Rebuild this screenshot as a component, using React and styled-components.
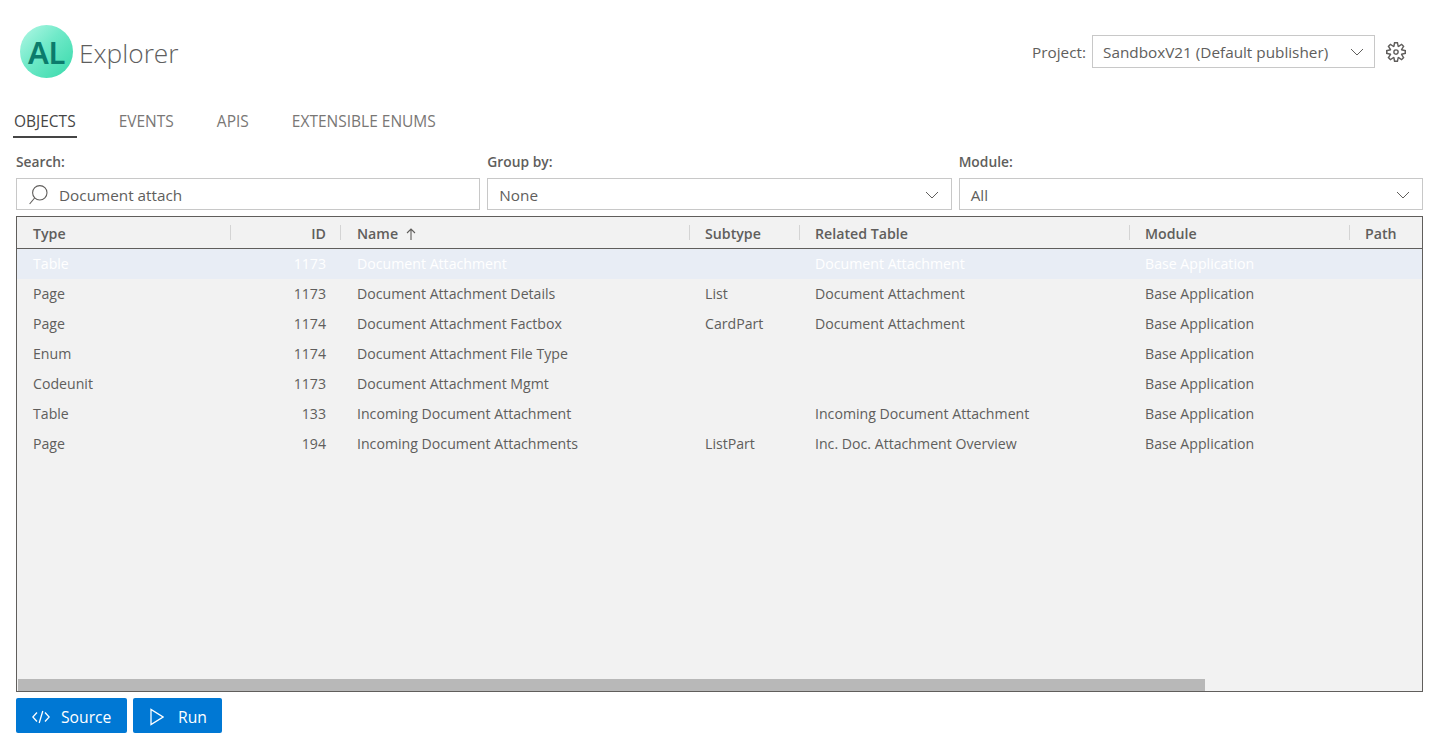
import React from 'react';
import styled, { createGlobalStyle } from 'styled-components';
import { VscSettingsGear } from 'react-icons/vsc';

const GlobalStyle = createGlobalStyle`
  html, body {
    margin: 0;
    padding: 0;
    background: #ffffff;
  }
  body {
    font-family: "Open Sans", "Noto Sans", "Liberation Sans", sans-serif;
    font-size: 14.15px;
    color: #605e5c;
  }
`;

const Page = styled.div`
  height: 742px;
  overflow: hidden;
  padding: 0 10px 0 16px;
  box-sizing: border-box;
`;

const Header = styled.header`
  height: 96px;
  display: flex;
  justify-content: space-between;
  align-items: flex-start;
`;

const Brand = styled.div`
  display: flex;
  align-items: center;
  gap: 6px;
  margin: 25px 0 0 4px;
`;

const LogoCircle = styled.div`
  width: 53px;
  height: 53px;
  border-radius: 50%;
  background: linear-gradient(135deg, #b4f8e6 0%, #6fe9c8 45%, #37d9aa 100%);
  display: flex;
  align-items: center;
  justify-content: center;
  color: #0b7b6c;
  font-family: "Noto Sans", sans-serif;
  font-size: 31px;
  font-weight: 600;
  letter-spacing: -0.5px;
`;

const BrandName = styled.span`
  font-size: 26.3px;
  font-weight: 300;
  color: #5e5e5e;
  line-height: 34px;
  margin-top: 2px;
`;

const ProjectArea = styled.div`
  display: flex;
  align-items: center;
  margin: 35px 17px 0 0;
  font-size: 15.3px;
`;

const ProjectLabel = styled.span`
  margin-right: 6px;
`;

const ProjectSelect = styled.div`
  width: 283px;
  height: 33px;
  box-sizing: border-box;
  border: 1px solid #c8c8c8;
  display: flex;
  align-items: center;
  justify-content: space-between;
  padding: 0 10px 0 10px;
`;

const GearButton = styled.div`
  display: flex;
  margin-left: 11px;
  font-size: 20px;
  color: #605e5c;
`;

const Tabs = styled.nav`
  display: flex;
  gap: 41px;
  height: 42px;
  margin-left: -3px;
`;

const Tab = styled.div`
  height: 42px;
  box-sizing: border-box;
  padding: 16px 1px 0;
  line-height: 18px;
  font-size: 15.5px;
  color: ${(p) => (p.$active ? '#454545' : '#797775')};
  border-bottom: ${(p) => (p.$active ? '2px solid #454545' : 'none')};
`;

const Filters = styled.div`
  display: grid;
  grid-template-columns: repeat(3, 1fr);
  gap: 7px;
  margin-top: 15px;
  width: 1407px;
`;

const Field = styled.div`
  display: flex;
  flex-direction: column;
`;

const FieldLabel = styled.label`
  height: 25px;
  line-height: 17px;
  font-size: 13.8px;
  font-weight: 600;
`;

const InputBox = styled.div`
  height: 32px;
  box-sizing: border-box;
  border: 1px solid #c8c8c8;
  display: flex;
  align-items: center;
  justify-content: ${(p) => (p.$select ? 'space-between' : 'flex-start')};
  padding: ${(p) => (p.$select ? '2px 12px 0 11px' : '2px 0 0 12px')};
  gap: 10px;
  font-size: 15.3px;
`;

const Table = styled.div`
  position: relative;
  width: 1407px;
  height: 476px;
  margin-top: 6px;
  box-sizing: border-box;
  border: 1px solid #605e5c;
  background: #f2f2f2;
  overflow: hidden;
`;

const HeadRow = styled.div`
  display: grid;
  grid-template-columns: 214px 110px 349px 110px 330px 220px 300px;
  width: 1633px;
  height: 32px;
  box-sizing: border-box;
  border-bottom: 1px solid #605e5c;
  font-size: 14.2px;
  font-weight: 600;
`;

const HeadCell = styled.div`
  display: flex;
  align-items: center;
  gap: 8px;
  justify-content: ${(p) => (p.$right ? 'flex-end' : 'flex-start')};
  padding: 2px 15px 0 ${(p) => p.$left}px;
  position: relative;
  &:not(:last-child)::after {
    content: '';
    position: absolute;
    right: 0;
    top: 8px;
    height: 15px;
    width: 1px;
    background: #d4d4d4;
  }
`;

const SortArrow = styled.span`
  display: flex;
`;

const Row = styled.div`
  display: grid;
  grid-template-columns: 214px 110px 349px 110px 330px 220px 300px;
  width: 1633px;
  height: 30px;
  padding-bottom: 2px;
  box-sizing: border-box;
  align-items: center;
  background: ${(p) => (p.$selected ? '#e8edf5' : 'transparent')};
  color: ${(p) => (p.$selected ? '#ffffff' : '#605e5c')};
`;

const Cell = styled.div`
  padding: 0 15px 0 ${(p) => p.$left}px;
  text-align: ${(p) => (p.$right ? 'right' : 'left')};
  white-space: nowrap;
`;

const ScrollThumb = styled.div`
  position: absolute;
  left: 1px;
  bottom: 0;
  width: 1187px;
  height: 12px;
  background: #b8b8b8;
`;

const Actions = styled.div`
  display: flex;
  gap: 6px;
  margin-top: 6px;
`;

const Button = styled.button`
  height: 35px;
  width: ${(p) => p.$width}px;
  padding: 2px 0 0 ${(p) => p.$pad}px;
  border: none;
  border-radius: 2px;
  background: #0078d4;
  color: #ffffff;
  font-family: inherit;
  font-size: 15.7px;
  font-weight: 500;
  display: flex;
  align-items: center;
  gap: ${(p) => p.$gap}px;
`;

const Chevron = () => (
  <svg width="14" height="14" viewBox="0 0 14 14" fill="none" stroke="#605e5c" strokeWidth="1">
    <path d="M1 4 L7 10 L13 4" />
  </svg>
);

const SearchIcon = () => (
  <svg width="20" height="20" viewBox="0 0 20 20" fill="none" stroke="#605e5c" strokeWidth="1.1">
    <circle cx="10.8" cy="7.8" r="7.2" />
    <path d="M5.6 13 L0.6 19" />
  </svg>
);

const UpArrow = () => (
  <svg width="10" height="12" viewBox="0 0 10 12" fill="none" stroke="#605e5c" strokeWidth="1.1">
    <path d="M5 12 V1 M1 5 L5 1 L9 5" />
  </svg>
);

const CodeIcon = () => (
  <svg width="18" height="14" viewBox="0 0 18 14" fill="none" stroke="#ffffff" strokeWidth="1.3">
    <path d="M5 2.5 L0.8 7 L5 11.5 M13 2.5 L17.2 7 L13 11.5 M10.8 1 L7.2 13" />
  </svg>
);

const PlayIcon = () => (
  <svg width="14" height="18" viewBox="0 0 14 18" fill="none" stroke="#ffffff" strokeWidth="1.3">
    <path d="M1 1.5 V16.5 L13 9 Z" />
  </svg>
);

const columns = [
  { key: 'type', label: 'Type', left: 16 },
  { key: 'id', label: 'ID', right: true, left: 15 },
  { key: 'name', label: 'Name', sorted: true, left: 16 },
  { key: 'subtype', label: 'Subtype', left: 15 },
  { key: 'related', label: 'Related Table', left: 15 },
  { key: 'module', label: 'Module', left: 15 },
  { key: 'path', label: 'Path', left: 15 },
];

const rows = [
  { type: 'Table', id: 1173, name: 'Document Attachment', subtype: '', related: 'Document Attachment', selected: true },
  { type: 'Page', id: 1173, name: 'Document Attachment Details', subtype: 'List', related: 'Document Attachment' },
  { type: 'Page', id: 1174, name: 'Document Attachment Factbox', subtype: 'CardPart', related: 'Document Attachment' },
  { type: 'Enum', id: 1174, name: 'Document Attachment File Type', subtype: '', related: '' },
  { type: 'Codeunit', id: 1173, name: 'Document Attachment Mgmt', subtype: '', related: '' },
  { type: 'Table', id: 133, name: 'Incoming Document Attachment', subtype: '', related: 'Incoming Document Attachment' },
  { type: 'Page', id: 194, name: 'Incoming Document Attachments', subtype: 'ListPart', related: 'Inc. Doc. Attachment Overview' },
];

export default function App() {
  return (
    <Page>
      <GlobalStyle />
      <Header>
        <Brand>
          <LogoCircle>AL</LogoCircle>
          <BrandName>Explorer</BrandName>
        </Brand>
        <ProjectArea>
          <ProjectLabel>Project:</ProjectLabel>
          <ProjectSelect>
            <span>SandboxV21 (Default publisher)</span>
            <Chevron />
          </ProjectSelect>
          <GearButton>
            <VscSettingsGear />
          </GearButton>
        </ProjectArea>
      </Header>
      <Tabs>
        <Tab $active>OBJECTS</Tab>
        <Tab>EVENTS</Tab>
        <Tab>APIS</Tab>
        <Tab>EXTENSIBLE ENUMS</Tab>
      </Tabs>
      <Filters>
        <Field>
          <FieldLabel>Search:</FieldLabel>
          <InputBox>
            <SearchIcon />
            <span>Document attach</span>
          </InputBox>
        </Field>
        <Field>
          <FieldLabel>Group by:</FieldLabel>
          <InputBox $select>
            <span>None</span>
            <Chevron />
          </InputBox>
        </Field>
        <Field>
          <FieldLabel>Module:</FieldLabel>
          <InputBox $select>
            <span>All</span>
            <Chevron />
          </InputBox>
        </Field>
      </Filters>
      <Table>
        <HeadRow>
          {columns.map((c) => (
            <HeadCell key={c.key} $right={c.right} $left={c.left}>
              {c.label}
              {c.sorted && (
                <SortArrow>
                  <UpArrow />
                </SortArrow>
              )}
            </HeadCell>
          ))}
        </HeadRow>
        {rows.map((r) => (
          <Row key={r.name} $selected={r.selected}>
            <Cell $left={16}>{r.type}</Cell>
            <Cell $left={15} $right>{r.id}</Cell>
            <Cell $left={16}>{r.name}</Cell>
            <Cell $left={15}>{r.subtype}</Cell>
            <Cell $left={15}>{r.related}</Cell>
            <Cell $left={15}>Base Application</Cell>
            <Cell $left={15} />
          </Row>
        ))}
        <ScrollThumb />
      </Table>
      <Actions>
        <Button $width={111} $pad={16} $gap={11}>
          <CodeIcon />
          Source
        </Button>
        <Button $width={89} $pad={17} $gap={14}>
          <PlayIcon />
          Run
        </Button>
      </Actions>
    </Page>
  );
}
